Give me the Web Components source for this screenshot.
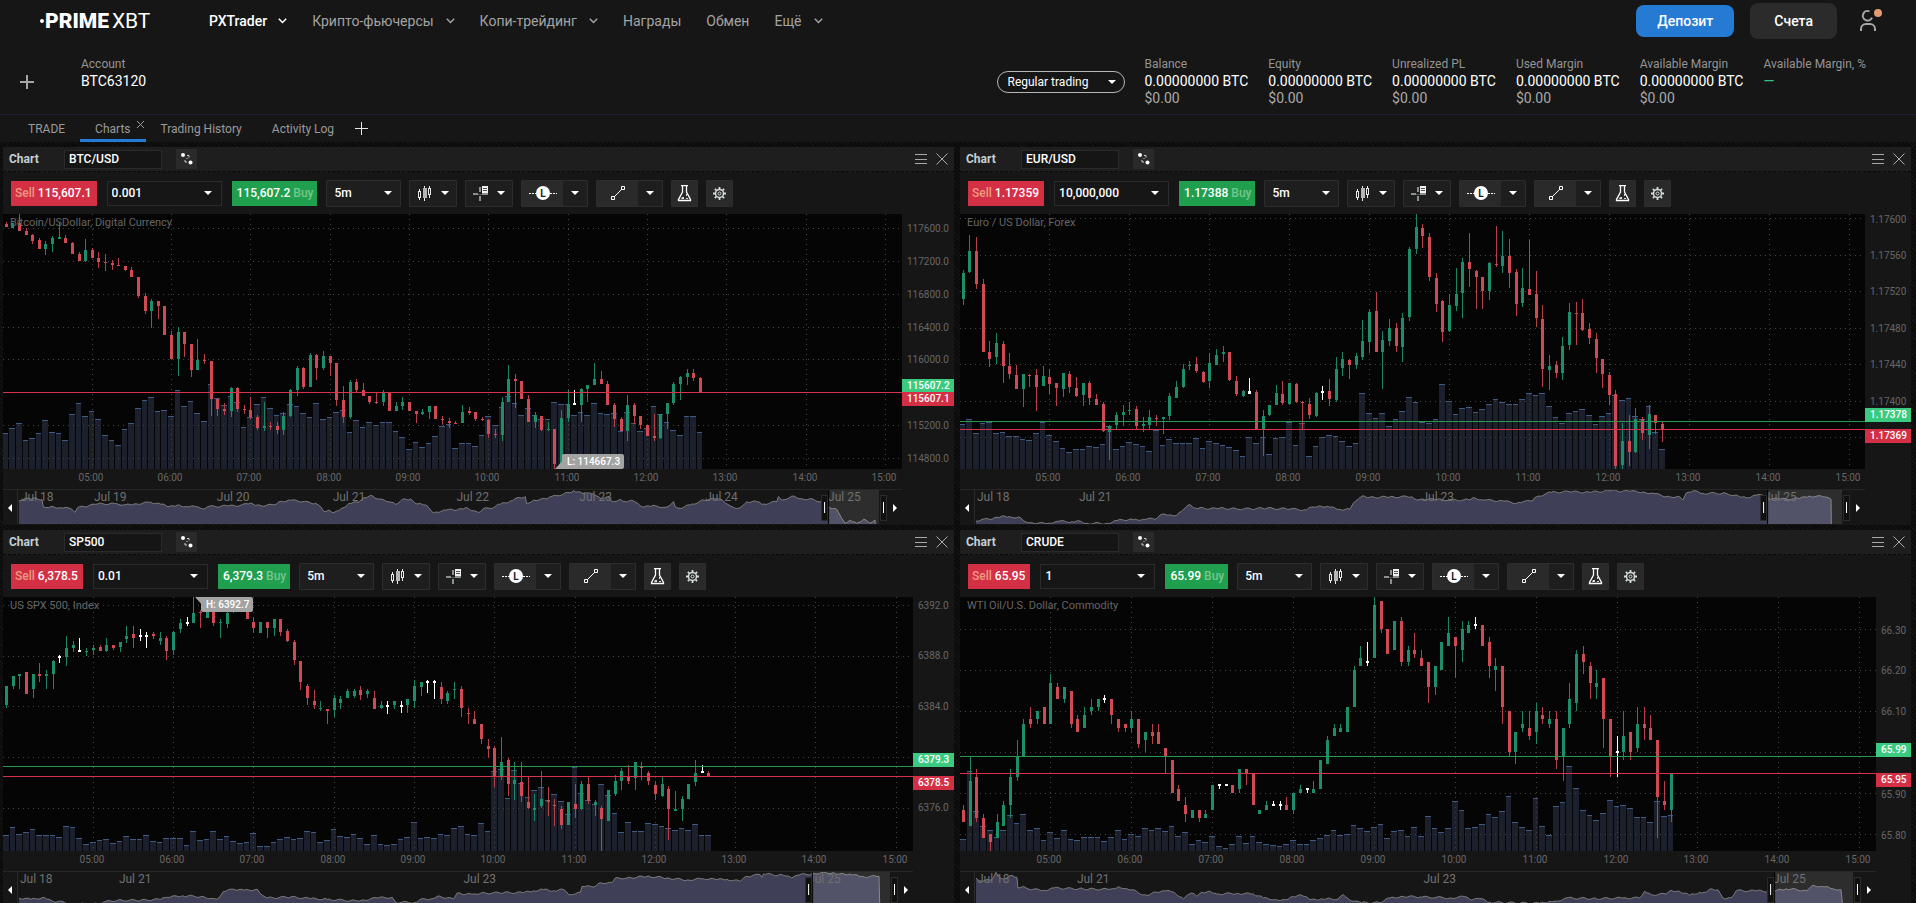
<!DOCTYPE html>
<html lang="ru">
<head>
<meta charset="utf-8">
<title>PXTrader</title>
<style>
  html, body {
    height: 100%;
    margin: 0;
  }

  body {
    background-color: #0b0b0b;
    background-image: repeating-linear-gradient(45deg, #131313 0 1px, transparent 1px 3px);
    color: #fff;
    display: flex;
    flex-direction: column;
    font-family: Roboto, "Liberation Sans", sans-serif;
    font-size: 12px;
    overflow: hidden;
  }

  body > * {
    flex: none;
  }

  main {
    display: grid;
    gap: 5px 6px;
    grid-template-columns: 1fr 1fr;
    padding: 5px 5px 0 3px;
  }
</style>
</head>
<body>

<site-header>
  <nav-item slot="nav" menu active>PXTrader</nav-item>
  <nav-item slot="nav" menu>Крипто-фьючерсы</nav-item>
  <nav-item slot="nav" menu>Копи-трейдинг</nav-item>
  <nav-item slot="nav">Награды</nav-item>
  <nav-item slot="nav">Обмен</nav-item>
  <nav-item slot="nav" menu>Ещё</nav-item>
</site-header>

<account-bar account="BTC63120">
  <account-metric label="Balance" value="0.00000000 BTC" usd="$0.00"></account-metric>
  <account-metric label="Equity" value="0.00000000 BTC" usd="$0.00"></account-metric>
  <account-metric label="Unrealized PL" value="0.00000000 BTC" usd="$0.00"></account-metric>
  <account-metric label="Used Margin" value="0.00000000 BTC" usd="$0.00"></account-metric>
  <account-metric label="Available Margin" value="0.00000000 BTC" usd="$0.00"></account-metric>
  <account-metric label="Available Margin, %" value="—" positive></account-metric>
</account-bar>

<tab-bar>
  <tab-item>TRADE</tab-item>
  <tab-item active>Charts</tab-item>
  <tab-item>Trading History</tab-item>
  <tab-item>Activity Log</tab-item>
</tab-bar>

<main>
  <chart-panel symbol="BTC/USD" amount="0.001" sell="115,607.1" buy="115,607.2">
    <price-chart data="btc"></price-chart>
  </chart-panel>
  <chart-panel symbol="EUR/USD" amount="10,000,000" sell="1.17359" buy="1.17388">
    <price-chart data="eur"></price-chart>
  </chart-panel>
  <chart-panel symbol="SP500" amount="0.01" sell="6,378.5" buy="6,379.3">
    <price-chart data="spx"></price-chart>
  </chart-panel>
  <chart-panel symbol="CRUDE" amount="1" sell="65.95" buy="65.99">
    <price-chart data="oil"></price-chart>
  </chart-panel>
</main>

<script>
// chart data
// y values are in thirds of a pixel, counted from `top`
// candle: direction, high, body top, body bottom, low
const CHARTS = {
  btc: {
    title: 'Bitcoin/USDollar, Digital Currency',
    width: 899, height: 255, axis: 52, top: 222, x0: 3.3, step: 6.61,
    grid: [265, 364, 463, 562, 658, 757, 856, 955],
    prices: [['117600.0', 265], ['117200.0', 364], ['116800.0', 461], ['116400.0', 560], ['116000.0', 658], ['115200.0', 854], ['114800.0', 953]],
    ask: {text: '115607.2', tag: 717},
    bid: {text: '115607.1', tag: 756, line: 757},
    mark: {text: 'L: 114667.3', x: 559, y: 240, w: 62, tip: '552,255 562,255 562,244'},
    candles: `r246,252,261,261 g249,249,263,263 r222,248,272,272 r264,273,285,285 r282,285,303,312 r294,300,327,327 g303,312,327,345 g288,294,312,336
      g249,291,297,297 r285,294,309,309 r306,309,342,342 r336,342,363,363 g297,330,363,366 r324,330,354,354 r336,354,366,384 r342,366,369,393
      r360,369,375,390 r354,375,378,378 r378,378,390,393 r381,390,411,411 r411,411,468,474 r459,468,513,522 g477,483,513,564 r483,483,498,537
      r498,498,585,585 r573,585,657,657 g561,576,657,708 r576,576,612,651 r612,612,690,711 g597,660,690,690 r642,660,663,672 r663,663,777,828
      r774,777,807,828 r789,807,813,825 g741,744,813,831 r741,744,807,816 r795,807,810,822 r771,810,831,837 r825,831,864,870 g786,858,864,873
      r846,858,861,870 r846,858,870,882 g816,828,870,885 g747,750,828,831 g678,684,750,768 r681,684,741,747 g639,645,741,741 r642,645,684,720
      g633,648,684,690 r648,648,669,708 r669,669,780,798 r738,780,831,849 g720,726,831,837 r717,726,750,756 r729,750,768,768 r768,768,786,792
      r759,786,789,792 g750,759,786,798 r759,759,813,813 g786,798,813,813 g771,786,798,810 r786,786,813,813 r813,813,822,849 g807,816,822,825
      g798,798,816,837 r798,798,837,837 r828,837,840,855 r834,843,849,864 r843,849,852,852 g795,816,849,849 r801,813,819,825 r816,816,837,843
      r831,837,840,843 r837,840,882,894 r867,882,885,894 g771,786,885,903 g675,717,786,786 r702,717,723,804 r723,723,777,777 r765,777,846,846
      g816,825,846,864 r828,828,870,873 g846,867,870,873 r867,867,972,987 g810,834,972,987 g750,792,834,846 w750,789,795,795 g744,747,795,846
      g735,735,747,786 g669,717,735,735 r693,717,732,732 r723,732,795,795 r789,795,837,861 r831,837,873,873 g765,795,873,903 r789,795,828,852
      r828,828,855,867 r855,855,888,888 r822,888,894,903 g822,822,894,897 g789,789,822,867 g726,732,789,795 g708,711,732,780 g687,699,711,735
      r687,699,714,723 r711,714,756,756`,
    volume: `880 865 850 901 895 880 841 877 880 901 823 790 829 814 838 886 901 916 868 850 805 781 772 814 811 829 751 799 784 820 844 733 775 796 769 787
      862 832 793 772 805 826 820 793 799 820 832 790 838 832 817 811 877 841 862 847 856 847 847 874 892 928 907 922 910 889 859 853 925 910 910 919
      886 829 856 802 769 790 826 805 826 838 838 787 793 793 826 817 826 790 820 823 820 874 817 850 874 865 799 823 847 871 886 829 829 877`,
    history: {
      left: 51, top: 1050, from: 812, to: 862,
      days: [['Jul 18', 3], ['Jul 19', 76], ['Jul 20', 199], ['Jul 21', 315], ['Jul 22', 439], ['Jul 23', 562], ['Jul 24', 688], ['Jul 25', 811]],
      points: `54,1082 72,1075 90,1078 105,1074 123,1079 127,1100 150,1100 180,1103 210,1106 222,1117 230,1103 250,1100 290,1092 340,1091 375,1094 400,1092 450,1087
        480,1093 505,1100 530,1095 560,1100 590,1100 605,1107 620,1100 680,1098 715,1098 750,1089 765,1097 820,1095 840,1084 870,1081 905,1085 945,1090 960,1100
        970,1115 985,1110 1000,1118 1015,1112 1045,1090 1075,1087 1090,1073 1110,1066 1130,1077 1165,1085 1185,1093 1205,1078 1230,1077 1250,1092 1275,1095
        1300,1119 1330,1110 1370,1110 1395,1103 1420,1112 1440,1116 1455,1103 1470,1105 1500,1093 1530,1083 1550,1073 1575,1070 1578,1090 1600,1080 1640,1077
        1655,1069 1690,1062 1720,1052 1745,1060 1780,1062 1800,1075 1820,1070 1835,1085 1860,1078 1875,1085 1900,1083 1920,1098 1950,1100 1965,1097 1990,1102
        2010,1095 2020,1085 2025,1100 2040,1105 2070,1095 2090,1090 2110,1080 2150,1077 2170,1083 2190,1098 2215,1105 2240,1085 2270,1085 2285,1093 2330,1085
        2335,1070 2345,1080 2380,1068 2405,1076 2440,1078 2460,1085 2484,1100 2510,1108 2525,1135 2535,1150 2550,1140 2570,1150 2590,1138 2610,1150 2625,1140 2626,1152`
    }
  },
  eur: {
    title: 'Euro / US Dollar, Forex',
    width: 905, height: 255, axis: 46, top: 222, x0: 3.3, step: 6.66,
    grid: [235, 346, 454, 565, 673, 784, 892],
    prices: [['1.17600', 236], ['1.17560', 344], ['1.17520', 454], ['1.17480', 563], ['1.17440', 673], ['1.17400', 782]],
    ask: {text: '1.17378', tag: 804, line: 844},
    bid: {text: '1.17369', tag: 867, line: 868},
    candles: `g390,399,477,495 g285,333,396,399 r291,333,432,447 r417,432,636,636 r603,636,657,681 g579,609,651,672 r603,612,678,729 r639,678,702,717
      r675,705,747,747 g702,702,747,801 r702,705,708,741 r687,705,741,813 g678,708,738,738 r687,711,732,762 r729,729,744,798 g699,699,747,771
      r693,702,741,759 r711,744,768,771 g729,729,765,798 r723,729,774,795 r762,777,795,795 r786,792,873,876 g855,858,876,960 g816,825,855,867
      g795,816,825,858 g786,810,813,825 r798,807,858,867 g831,852,858,876 g810,831,855,867 r825,834,837,858 g831,831,837,882 g759,768,828,840
      g723,741,774,774 g672,687,741,744 g663,675,678,690 r651,672,693,699 r693,696,726,729 g639,669,723,744 g627,645,675,675 g618,636,642,666
      r636,636,720,723 r708,723,762,768 g750,753,768,771 w714,753,762,762 r750,756,867,867 g810,828,867,948 g795,795,825,828 g735,759,795,795
      r723,762,789,795 g729,729,792,795 r729,732,786,789 r783,786,789,867 r774,792,825,837 g756,759,828,831 w738,753,759,780 r717,753,777,798
      g651,687,780,786 g636,657,684,708 r657,660,675,717 g639,648,675,687 g540,603,651,660 g507,516,606,639 r456,513,636,636 g573,600,636,747
      g537,564,603,618 r549,564,618,636 g519,534,621,666 g321,327,531,543 g222,261,327,342 r252,264,288,324 r279,291,411,423 r399,414,492,516
      r480,483,576,606 g462,495,573,576 g384,462,498,513 g354,366,459,534 r279,366,387,441 r390,393,411,507 r411,411,453,507 g366,369,453,480
      r258,372,375,381 g273,348,378,399 r297,348,399,444 r387,396,492,528 g384,444,489,501 r300,447,465,465 r393,462,534,561 r495,537,687,741
      g645,678,690,750 r663,675,699,714 g591,618,699,720 g489,516,615,630 r486,519,522,615 r477,519,570,573 r549,567,594,612 r579,597,654,699
      r657,657,702,744 r696,705,765,795 r750,762,978,987 g849,903,975,987 r825,903,936,978 g804,837,936,939 r831,837,879,900 g795,822,885,927
      r825,825,849,882 r846,852,870,906`,
    volume: `853 838 880 850 847 880 877 889 889 898 901 880 847 886 904 925 937 928 928 919 922 913 859 928 919 907 913 919 934 871 916 898 910 910 910 895
      925 904 910 916 922 931 949 892 910 892 943 895 892 847 916 850 949 919 892 886 889 904 919 910 760 820 835 820 859 838 814 772 787 847 850 838
      733 784 823 805 802 817 808 793 778 787 793 793 778 760 766 760 799 832 850 820 814 808 826 853 829 820 766 781 775 829 838 799 877 928`,
    history: {
      left: 54, top: 1050, from: 794, to: 868,
      days: [['Jul 18', 2], ['Jul 21', 104], ['Jul 23', 447], ['Jul 25', 790]],
      points: `57,1143 75,1138 95,1137 120,1132 140,1127 150,1132 185,1131 200,1143 225,1148 270,1151 300,1144 345,1145 365,1142 390,1150 450,1150 480,1142 515,1139
        530,1139 560,1138 600,1136 610,1125 640,1124 660,1126 680,1108 700,1094 710,1103 730,1103 750,1108 790,1104 840,1107 930,1105 1000,1107 1050,1110
        1065,1101 1090,1097 1120,1102 1150,1108 1180,1108 1190,1090 1205,1078 1220,1067 1240,1072 1300,1071 1365,1070 1375,1077 1400,1078 1440,1079 1490,1080
        1540,1080 1550,1073 1580,1080 1640,1083 1680,1090 1700,1085 1728,1083 1740,1070 1785,1057 1840,1055 1900,1057 1960,1052 2020,1054 2060,1056 2090,1060
        2130,1070 2170,1070 2180,1080 2190,1059 2210,1053 2240,1060 2310,1060 2350,1070 2370,1073 2400,1066 2434,1066 2436,1075 2470,1078 2530,1076 2560,1068
        2600,1070 2625,1078 2626,1152`
    }
  },
  spx: {
    title: 'US SPX 500, Index',
    width: 910, height: 254, axis: 41, top: 216, x0: 3.4, step: 6.69,
    grid: [241, 394, 544, 697, 850],
    prices: [['6392.0', 241], ['6388.0', 391], ['6384.0', 544], ['6376.0', 847]],
    ask: {text: '6379.3', tag: 684, line: 724},
    bid: {text: '6378.5', tag: 753, line: 754},
    mark: {text: 'H: 6392.7', x: 198, y: 0, w: 52, tip: '192,0 201,0 201,10'},
    candles: `g483,483,540,549 g453,453,483,492 g447,447,453,492 r441,441,507,507 g447,447,492,519 r414,447,453,471 g435,447,453,492 g405,408,447,492
      w390,393,399,414 g333,369,396,423 g348,360,369,381 w339,375,381,381 g369,378,381,393 g360,369,375,390 r360,366,378,378 g339,360,378,381
      r360,360,369,375 g351,351,366,381 g303,333,342,354 r303,327,339,369 w312,330,336,348 w321,330,336,369 r321,327,333,342 g321,339,348,360
      r333,339,378,405 g318,321,375,390 g282,294,312,324 w276,291,297,303 g216,264,294,294 r255,261,264,309 g240,255,279,279 r240,258,294,303
      g282,291,294,339 g255,264,297,309 g240,250,262,264 r230,240,250,255 r240,255,282,282 r276,291,309,324 g291,291,324,324 r291,291,309,339
      g282,282,309,333 r282,282,321,333 r312,318,348,351 r345,351,405,420 r408,408,471,495 r477,483,519,540 r495,528,540,552 g528,549,552,558
      r552,552,558,597 g510,519,555,576 g513,522,534,552 g492,498,519,519 g492,498,513,519 r483,495,510,525 g492,498,507,519 r498,519,552,552
      g528,540,549,552 w528,540,546,567 g528,528,540,552 w528,540,546,564 g522,522,540,564 g465,483,528,549 g471,471,486,513 w465,468,474,504
      w465,468,474,522 r471,486,522,537 g498,504,528,537 g471,492,495,522 r483,492,549,576 r549,564,567,597 r558,582,597,597 r597,597,642,657
      r642,663,672,699 r663,669,753,786 g636,711,753,765 r699,705,777,813 g711,765,777,825 r711,771,813,831 r756,831,849,852 g807,849,855,888
      g738,822,843,849 r786,825,831,873 r822,840,843,903 r843,852,900,912 g831,831,900,900 r777,837,852,879 g768,777,852,855 r756,777,828,837
      g825,831,840,873 r843,849,882,978 g795,795,888,888 g750,768,807,813 g729,738,768,795 r720,753,768,777 g711,711,759,795 r711,726,729,765
      r738,744,768,780 r768,780,807,825 g756,777,813,816 r783,792,852,945 g798,852,858,858 g813,822,852,888 g777,777,822,822 g705,744,771,783
      w720,738,744,744 r738,744,753,753`,
    volume: `931 907 928 922 913 931 931 931 937 904 907 940 958 952 946 943 955 949 934 943 943 931 949 952 940 940 940 961 919 946 943 919 943 934 949 955
      952 925 964 964 952 943 937 943 940 919 922 952 946 913 934 937 928 940 958 931 958 961 958 943 937 892 940 937 940 928 931 910 904 928 931 895
      919 737 731 820 734 775 817 796 787 826 808 829 868 725 805 826 838 778 811 865 922 892 919 919 895 898 904 910 916 910 916 898 931 931`,
    history: {
      left: 51, top: 1042, from: 796, to: 873,
      days: [['Jul 18', 2], ['Jul 21', 101], ['Jul 23', 446], ['Jul 25', 791]],
      points: `54,1120 90,1124 130,1118 145,1124 155,1130 190,1133 210,1138 300,1138 315,1130 350,1127 420,1127 480,1124 500,1118 545,1113 600,1116 640,1122 655,1120
        668,1100 700,1094 730,1097 770,1094 785,1112 800,1120 870,1117 930,1122 980,1124 1050,1128 1090,1126 1130,1120 1175,1118 1185,1133 1250,1133 1265,1122
        1290,1123 1310,1115 1330,1120 1360,1122 1370,1105 1390,1110 1420,1108 1440,1106 1510,1104 1570,1104 1600,1098 1630,1095 1660,1098 1690,1095 1705,1110
        1740,1103 1745,1085 1780,1087 1800,1074 1835,1074 1845,1060 1880,1060 1940,1055 2000,1060 2060,1066 2110,1062 2150,1065 2180,1064 2220,1070 2240,1055
        2280,1050 2285,1058 2290,1048 2350,1052 2375,1060 2400,1050 2434,1048 2440,1046 2500,1044 2520,1048 2550,1048 2580,1056 2637,1055 2639,1144`
    }
  },
  oil: {
    title: 'WTI Oil/U.S. Dollar, Commodity',
    width: 916, height: 254, axis: 35, top: 216, x0: 3.3, step: 6.74,
    grid: [313, 436, 559, 682, 805, 928],
    prices: [['66.30', 314], ['66.20', 436], ['66.10', 559], ['65.90', 806], ['65.80', 929]],
    ask: {text: '65.99', tag: 654, line: 694},
    bid: {text: '65.95', tag: 744, line: 745},
    candles: `r840,855,891,891 g696,768,903,903 r732,756,879,891 r867,879,939,939 r927,927,951,978 g867,891,939,939 g828,840,903,903 g732,756,840,879
      g645,693,756,768 g582,597,693,696 r546,582,597,609 g558,558,582,597 r546,546,597,597 g447,474,597,597 r474,486,522,522 g486,486,522,534
      r498,498,597,609 r570,582,621,621 g546,570,609,609 g522,546,558,570 g522,522,546,558 w510,519,525,534 r522,522,570,597 r582,582,609,621
      r597,597,609,621 g558,582,609,621 r582,582,657,669 g621,621,645,681 r597,621,633,657 r597,621,657,657 r669,669,693,747 r705,705,804,804
      r780,792,828,828 r816,840,867,891 g855,855,879,879 r855,855,879,891 g855,867,879,879 g780,780,855,855 w777,777,783,792 w777,777,783,783
      r780,780,804,804 g732,732,792,804 r732,732,744,780 r744,747,840,840 g855,855,867,867 g828,840,855,855 w828,837,843,843 w828,837,843,855
      r816,840,855,855 g804,804,855,867 g780,792,804,804 w789,789,795,804 g768,792,804,804 g705,705,792,792 g633,645,717,717 g597,609,633,633
      g597,609,621,621 g546,546,621,621 g423,435,546,546 g363,399,423,423 w351,408,414,423 g216,240,399,399 r228,228,312,324 r312,312,387,387
      g288,288,375,375 r276,288,411,423 g363,375,411,423 r324,375,387,399 r375,399,423,423 r411,411,486,534 g423,423,486,510 g351,351,435,435
      g276,324,363,363 r336,336,363,459 g288,312,375,411 g288,300,324,324 w276,297,303,312 r300,300,363,363 r336,351,423,459 g399,423,435,498
      r423,423,546,597 r558,558,681,693 g621,621,681,717 g558,597,609,621 r558,609,633,645 g534,558,621,657 r546,570,582,597 g558,582,597,609
      r558,582,705,732 g609,609,693,768 g474,522,597,609 g375,387,534,558 r363,387,411,447 r411,423,474,522 g435,474,486,522 r459,459,582,669
      r582,582,693,756 w633,678,684,756 g558,633,681,705 r621,621,681,705 g546,597,669,681 r546,597,609,645 r570,609,645,645 r645,645,816,939
      r768,828,840,855 g744,744,855,891`,
    volume: `943 739 859 904 916 937 916 871 895 868 916 910 946 922 940 916 943 946 937 937 937 949 937 916 943 928 934 910 916 910 919 904 934 922 958 946
      952 934 964 970 958 934 955 934 952 958 961 964 958 946 958 958 946 940 931 916 931 928 901 910 919 907 898 940 919 916 934 907 934 874 910 922
      910 829 856 910 907 898 868 877 859 814 892 907 916 820 904 931 844 832 724 790 856 871 886 865 826 844 841 850 877 877 892 829 874 871`,
    history: {
      left: 54, top: 1042, from: 801, to: 879,
      days: [['Jul 18', 2], ['Jul 21', 102], ['Jul 23', 449], ['Jul 25', 799]],
      points: `57,1060 75,1070 105,1065 117,1043 130,1060 150,1060 165,1052 180,1058 183,1090 200,1085 215,1093 260,1097 290,1090 380,1093 460,1094 485,1086 510,1092
        530,1095 545,1105 570,1112 590,1103 620,1098 650,1102 680,1122 705,1105 720,1115 735,1103 760,1100 780,1108 840,1106 890,1108 920,1120 960,1125 985,1125
        1010,1116 1035,1112 1060,1125 1085,1127 1110,1122 1145,1123 1160,1110 1175,1122 1190,1130 1215,1134 1270,1134 1300,1120 1340,1115 1390,1117 1440,1118
        1480,1120 1525,1116 1545,1126 1570,1122 1600,1133 1750,1136 1780,1130 1800,1130 1830,1120 1920,1122 2000,1120 2050,1120 2065,1100 2085,1110 2130,1108
        2145,1097 2170,1100 2200,1112 2230,1103 2250,1103 2260,1094 2285,1095 2300,1120 2325,1120 2340,1098 2400,1099 2450,1100 2460,1098 2490,1092 2550,1098
        2570,1082 2600,1086 2630,1092 2655,1095 2660,1144`
    }
  }
};

const HOURS = ['05:00', '06:00', '07:00', '08:00', '09:00', '10:00', '11:00', '12:00', '13:00', '14:00', '15:00'];

const COLORS = {
  r: ['#b5404a', '#cf4a55'],
  g: ['#1c8566', '#1d8e6c'],
  w: ['#ffffff', '#ffffff']
};

const ICONS = {
  candles: `<svg width="15" height="15" viewBox="0 0 15 15" fill="none" stroke="#e8e8e8" shape-rendering="crispEdges">
    <path d="M2.5 3v2M2.5 12v2M12.5 0v2M12.5 9v3"/><rect x="1.500" y="5.500" width="2" height="6"/><rect x="11.500" y="2.500" width="2" height="6"/>
    <path d="M7.500 0v15"/><rect x="6" y="2" width="4" height="10" fill="#b4b4b4" stroke="none"/></svg>`,
  cross: `<svg width="15" height="15" viewBox="0 0 15 15" shape-rendering="crispEdges">
    <path d="M0 8h5M9 8h6M7 1v5M7 10v5" stroke="#8a8f8f" stroke-width="2"/><path d="M5 8h4" stroke="#555"/>
    <path d="M9 0h6v7h-6z" fill="#f2f2f2"/><path d="M10 2.500h4M10 4.500h4" stroke="#555"/></svg>`,
  level: `<svg width="28" height="14" viewBox="0 0 28 14"><path d="M0 7.500h28" stroke="#fff" stroke-dasharray="2 1"/>
    <circle cx="14" cy="7" r="7" fill="#fff"/><text x="14" y="11" font-size="10" font-weight="700" text-anchor="middle" fill="#222">L</text></svg>`,
  line: `<svg width="14" height="14" viewBox="0 0 14 14" fill="none" stroke="#fff"><path d="M3 11l8-8"/><path d="M.5 10.500h3v3h-3zM10.500.5h3v3h-3z"/></svg>`,
  flask: `<svg width="15" height="17" viewBox="0 0 15 17" fill="none" stroke="#fff"><path d="M4 .5h7M5.500 1v6L1.500 14.500v1h12v-1L9.500 7V1" stroke-width="1.300"/>
    <path d="M5 12h2v2H4zM9 9h1v2H9zM9 13h2v1H9z" fill="#ddd" stroke="none"/></svg>`,
  gear: `<svg width="13" height="13" viewBox="0 0 13 13" fill="none" stroke="#d5dcdc"><circle cx="6.500" cy="6.500" r="4" stroke-width="1.500"/>
    <circle cx="6.500" cy="6.500" r="1.500"/><path d="M6.500 0v2M6.500 11v2M0 6.500h2M11 6.500h2M1.900 1.900l1.400 1.400M9.700 9.700l1.400 1.400M11.100 1.900L9.700 3.300M3.300 9.700l-1.400 1.400" stroke-width="1.800"/></svg>`,
  link: `<svg width="12" height="12" viewBox="0 0 12 12" fill="#fff"><circle cx="2" cy="2" r="2"/><circle cx="9.500" cy="9.500" r="2"/>
    <path d="M6 2.500h2v2M4 7v2h2M5.500 6l1-1" fill="none" stroke="#ccc"/></svg>`,
  menu: `<svg width="12" height="11" viewBox="0 0 12 11" stroke="#a8a8a8" shape-rendering="crispEdges"><path d="M0 .5h12M0 5h12M0 9.500h12"/></svg>`,
  close: `<svg width="12" height="12" viewBox="0 0 12 12" stroke="#a8a8a8"><path d="M.5.5l11 11M11.500.5l-11 11"/></svg>`
};

// shared button and select look
const CONTROLS = `
  button, select, input {
    background: none;
    border: none;
    border-radius: 0;
    box-sizing: border-box;
    color: inherit;
    font: inherit;
    margin: 0;
    padding: 0;
  }
  select {
    appearance: none;
    outline: none;
    width: 100%;
  }
  button {
    align-items: center;
    cursor: pointer;
    display: flex;
    justify-content: center;
  }
  svg {
    display: block;
  }
  .drop {
    align-items: center;
    display: grid;
  }
  .drop > select, .drop::after {
    grid-area: 1 / 1;
  }
  .drop::after, .caret::after {
    border-left: 4px solid transparent;
    border-right: 4px solid transparent;
    border-top: 4px solid #fff;
    content: '';
  }
  .drop::after {
    justify-self: end;
    margin-right: 8px;
    pointer-events: none;
  }`;

class SiteHeader extends HTMLElement {
  constructor() {
    super();
    const shadow = this.attachShadow({mode: 'open'});
    shadow.innerHTML = `
      <style>
        ${CONTROLS}
        :host {
          align-items: center;
          background: #161616;
          display: flex;
          height: 41px;
          padding: 0 34px 0 40px;
        }
        .logo {
          align-items: center;
          color: #fff;
          display: flex;
          font-size: 21px;
          font-weight: 400;
          text-decoration: none;
          width: 169px;
        }
        .logo b {
          font-weight: 900;
          margin-right: 3px;
        }
        .logo svg {
          margin-right: 1px;
        }
        nav {
          display: flex;
          flex: 1;
          gap: 25px;
        }
        .deposit, .accounts {
          border-radius: 8px;
          font-size: 14px;
          font-weight: 500;
        }
        .deposit {
          background: #257ad3;
          height: 32px;
          margin-right: 16px;
          padding: 0 21px;
        }
        .accounts {
          background: #2b2b2b;
          height: 36px;
          margin-right: 21px;
          padding: 0 24px;
        }
      </style>
      <a class="logo" href="#" aria-label="PrimeXBT">
        <svg width="4" height="6" viewBox="0 0 4 6"><circle cx="2" cy="3" r="2" fill="#fff"/></svg><b>PRIME</b>XBT
      </a>
      <nav><slot name="nav"></slot></nav>
      <button class="deposit">Депозит</button>
      <button class="accounts">Счета</button>
      <button aria-label="Profile">
        <svg width="24" height="25" viewBox="1 0 24 25" fill="none" stroke="#a6a6a6" stroke-width="2">
          <path d="M12.500 3.300a4.800 4.800 0 1 0 2.500 6.500"/><path d="M4 23v-2a5 5 0 0 1 5-5h4a5 5 0 0 1 5 5v2"/>
          <circle cx="21" cy="5" r="4" fill="#e49a72" stroke="none"/>
        </svg>
      </button>`;
  }
}

class NavItem extends HTMLElement {
  constructor() {
    super();
    const shadow = this.attachShadow({mode: 'open'});
    shadow.innerHTML = `
      <style>
        :host {
          display: block;
        }
        a {
          align-items: center;
          color: #a3a3a3;
          display: flex;
          font-size: 14px;
          gap: 12px;
          line-height: 16px;
          text-decoration: none;
        }
        svg {
          display: none;
        }
        :host([menu]) svg {
          display: block;
        }
        :host([active]) a {
          color: #fff;
          font-weight: 500;
          gap: 11px;
        }
      </style>
      <a href="#"><slot></slot>
        <svg width="9" height="6" viewBox="0 0 9 6" fill="none" stroke="currentColor" stroke-width="1.500"><path d="M.8.8l3.700 3.700L8.200.8"/></svg>
      </a>`;
  }
}

class AccountBar extends HTMLElement {
  connectedCallback() {
    const shadow = this.attachShadow({mode: 'open'});
    shadow.innerHTML = `
      <style>
        ${CONTROLS}
        :host {
          align-items: center;
          background: #161616;
          border-bottom: 1px solid #1c2136;
          display: flex;
          height: 65px;
          padding: 8px 50px 0 20px;
        }
        .add {
          margin-right: 47px;
        }
        .account {
          flex: 1;
        }
        .mode {
          border: 1px solid #b5b5b5;
          border-radius: 11px;
          height: 20px;
          margin-right: 20px;
          width: 126px;
        }
        .mode select {
          height: 20px;
          padding: 0 10px;
        }
        .metrics {
          display: flex;
          gap: 20px;
        }
      </style>
      <button class="add" aria-label="Add account">
        <svg width="14" height="14" viewBox="0 0 14 14" stroke="#a6a6a6" stroke-width="2"><path d="M7 0v14M0 7h14"/></svg>
      </button>
      <account-metric class="account" label="Account" value="${this.getAttribute('account')}"></account-metric>
      <div class="mode drop"><select aria-label="Trading mode"><option>Regular trading</option></select></div>
      <div class="metrics"><slot></slot></div>`;
  }
}

class AccountMetric extends HTMLElement {
  connectedCallback() {
    const shadow = this.attachShadow({mode: 'open'});
    shadow.innerHTML = `
      <style>
        :host {
          display: grid;
          font-size: 14px;
          grid-template-rows: 17px 17px 17px;
          line-height: 17px;
          white-space: nowrap;
        }
        .label {
          color: #949494;
          font-size: 12px;
        }
        .usd {
          color: #a9a9a9;
        }
        :host([positive]) .value {
          color: #35c481;
        }
      </style>
      <div class="label">${this.getAttribute('label')}</div>
      <div class="value">${this.getAttribute('value')}</div>
      <div class="usd">${this.getAttribute('usd') || ''}</div>`;
  }
}

class TabBar extends HTMLElement {
  constructor() {
    super();
    const shadow = this.attachShadow({mode: 'open'});
    shadow.innerHTML = `
      <style>
        ${CONTROLS}
        :host {
          align-items: center;
          background: #161616;
          display: flex;
          height: 27px;
          padding-left: 13px;
        }
        button {
          margin-left: 6px;
        }
      </style>
      <slot></slot>
      <button aria-label="Add tab">
        <svg width="13" height="13" viewBox="0 0 13 13" stroke="#e6e6e6" shape-rendering="crispEdges"><path d="M6.500 0v13M0 6.500h13"/></svg>
      </button>`;
  }
}

class TabItem extends HTMLElement {
  constructor() {
    super();
    const shadow = this.attachShadow({mode: 'open'});
    shadow.innerHTML = `
      <style>
        ${CONTROLS}
        :host {
          color: #9a9a9a;
          display: block;
          position: relative;
        }
        .tab {
          border-bottom: 3px solid transparent;
          height: 27px;
          padding: 4px 15px 0;
        }
        .close {
          display: none;
          position: absolute;
          right: 2px;
          top: 6px;
        }
        :host([active]) .tab {
          border-color: #257ad3;
        }
        :host([active]) .close {
          display: block;
        }
      </style>
      <button class="tab"><slot></slot></button>
      <button class="close" aria-label="Close tab">
        <svg width="7" height="7" viewBox="0 0 7 7" stroke="#9a9a9a"><path d="M0 0l7 7M7 0L0 7"/></svg>
      </button>`;
  }
}

class ChartPanel extends HTMLElement {
  connectedCallback() {
    const shadow = this.attachShadow({mode: 'open'});
    const get = name => this.getAttribute(name);
    shadow.innerHTML = `
      <style>
        ${CONTROLS}
        :host {
          background: #161616;
          display: flex;
          flex-direction: column;
          min-width: 0;
        }
        header {
          align-items: center;
          background: #1e1e1e;
          border-bottom: 1px dashed #080808;
          display: flex;
          height: 24px;
          padding: 0 6px;
        }
        h2 {
          color: #c3cfd4;
          font-size: 12px;
          font-weight: 700;
          margin: 0;
          width: 55px;
        }
        .symbol {
          background: #151515;
          border: 1px solid #2b2b2b;
          font-weight: 500;
          height: 19px;
          margin-right: 14px;
          padding: 0 4px;
          width: 98px;
        }
        .link {
          background: #2a2a2a;
          height: 20px;
          margin-right: auto;
          width: 21px;
        }
        .menu {
          margin-right: 9px;
        }
        .toolbar {
          align-items: center;
          display: flex;
          gap: 8px;
          height: 42px;
          padding: 0 8px;
        }
        .trade {
          align-items: center;
          display: flex;
          gap: 10px;
          margin-right: 1px;
        }
        .sell, .buy {
          font-weight: 500;
          gap: 3px;
          height: 25px;
        }
        .sell {
          background: #d32f45;
          padding: 0 5px 0 4px;
        }
        .sell span {
          color: #ee9a80;
        }
        .buy {
          background: #20a04f;
          padding: 0 4px 0 5px;
        }
        .buy span {
          color: #76c68a;
        }
        .amount {
          background: #161616;
          border: 1px solid #2b2b2b;
          box-sizing: border-box;
          font-weight: 500;
          height: 25px;
          width: 115px;
        }
        .amount select {
          height: 23px;
          padding: 0 4px;
        }
        .amount::after {
          margin-right: 9px;
        }
        .tool {
          background: #1e1e1e;
          border: 1px solid #2d2d2d;
          border-radius: 1px;
          box-sizing: border-box;
          height: 27px;
        }
        .period {
          font-weight: 500;
          width: 75px;
        }
        .period select {
          height: 25px;
          padding: 0 7px;
        }
        .pick {
          gap: 9px;
          width: 48px;
        }
        .split {
          display: flex;
        }
        .split button {
          background: #2a2a2a;
          height: 25px;
          width: 41px;
        }
        .split button + button {
          background: #1e1e1e;
          width: 24px;
        }
        .icon {
          background: #2a2a2a;
          width: 27px;
        }
      </style>
      <header>
        <h2>Chart</h2>
        <input class="symbol" aria-label="Symbol" value="${get('symbol')}">
        <button class="link" aria-label="Link">${ICONS.link}</button>
        <button class="menu" aria-label="Menu">${ICONS.menu}</button>
        <button aria-label="Close">${ICONS.close}</button>
      </header>
      <div class="toolbar">
        <div class="trade">
          <button class="sell"><span>Sell</span>${get('sell')}</button>
          <div class="amount drop"><select aria-label="Amount"><option>${get('amount')}</option></select></div>
          <button class="buy">${get('buy')}<span>Buy</span></button>
        </div>
        <div class="tool period drop"><select aria-label="Period"><option>5m</option></select></div>
        <button class="tool pick caret" aria-label="Chart type">${ICONS.candles}</button>
        <button class="tool pick caret" aria-label="Crosshair">${ICONS.cross}</button>
        <div class="tool split">
          <button aria-label="Limit order">${ICONS.level}</button>
          <button class="caret" aria-label="Order types"></button>
        </div>
        <div class="tool split">
          <button aria-label="Trend line">${ICONS.line}</button>
          <button class="caret" aria-label="Drawings"></button>
        </div>
        <button class="tool icon" aria-label="Studies">${ICONS.flask}</button>
        <button class="tool icon" aria-label="Settings">${ICONS.gear}</button>
      </div>
      <slot></slot>`;
  }
}

class PriceChart extends HTMLElement {
  connectedCallback() {
    const c = CHARTS[this.getAttribute('data')];
    const shadow = this.attachShadow({mode: 'open'});
    shadow.innerHTML = `
      <style>
        ${CONTROLS}
        :host {
          display: grid;
          grid-template-columns: minmax(0, 1fr) ${c.axis}px;
        }
        svg {
          overflow: hidden;
          width: 100%;
        }
        text {
          fill: #666;
          font-size: 10px;
        }
        .plot {
          background: #050505;
        }
        .plot .title {
          font-size: 11px;
        }
        .prices {
          grid-area: 1 / 2 / 4 / 3;
        }
        .tag, .mark {
          fill: #fff;
          font-weight: 500;
        }
        .history {
          border-top: 1px solid #262626;
          display: flex;
          height: 35px;
        }
        .history button {
          flex: 0 0 14px;
        }
        .history button svg {
          width: 4px;
        }
        .history > svg {
          border-left: 1px solid #2a2a2a;
          flex: 1;
          min-width: 0;
        }
        .history text {
          fill: #707070;
          font-size: 12px;
        }
      </style>
      <svg class="plot" height="${c.height}">
        <svg viewBox="0 0 ${c.width} ${c.height}" width="100%" height="100%" preserveAspectRatio="none" shape-rendering="crispEdges">
          ${this.volume(c)}${this.grid(c)}${this.candles(c)}${this.lines(c)}
        </svg>
        <text class="title" x="7" y="12">${c.title}</text>
        ${this.mark(c)}
      </svg>
      <svg class="times" height="20">${this.times(c)}</svg>
      <div class="history">
        <button aria-label="Back"><svg height="8" viewBox="0 0 4 8"><path d="M4 0v8L0 4z" fill="#fff"/></svg></button>
        ${this.history(c)}
        <button aria-label="Forward"><svg height="8" viewBox="0 0 4 8"><path d="M0 0v8l4-4z" fill="#fff"/></svg></button>
      </div>
      <svg class="prices" height="${c.height + 20}">${this.prices(c)}</svg>`;
  }

  x(c, i) {
    return Math.floor(c.x0 + i * c.step);
  }

  y(c, value) {
    return Math.round((value - c.top) / 3);
  }

  volume(c) {
    return c.volume.trim().split(/\s+/).map((v, i) => {
      const x = this.x(c, i) - 3;
      const w = this.x(c, i + 1) - 4 - x;
      const y = this.y(c, +v);
      return `<rect x="${x}" y="${y}" width="${w}" height="${c.height - y}" fill="#1c202c"/><rect x="${x}" y="${y}" width="${w}" height="1" fill="#3f5a84"/>`;
    }).join('');
  }

  grid(c) {
    const rows = c.grid.map(v => `M0 ${this.y(c, v)}.5H${c.width}`).join('');
    const cols = HOURS.map((h, i) => `M${this.x(c, 13 + 12 * i)}.5 0V${c.height}`).join('');
    return `<path d="${rows}${cols}" stroke="#424242" stroke-dasharray="1 4" fill="none"/>`;
  }

  candles(c) {
    return c.candles.trim().split(/\s+/).map((item, i) => {
      const [high, top, bottom, low] = item.slice(1).split(',').map(v => this.y(c, +v));
      const [wick, body] = COLORS[item[0]];
      const x = this.x(c, i);
      return `<rect x="${x}" y="${high}" width="1" height="${low - high}" fill="${wick}"/>
        <rect x="${x - 1}" y="${top}" width="3" height="${Math.max(1, bottom - top)}" fill="${body}"/>`;
    }).join('');
  }

  lines(c) {
    const line = (v, color) => v ? `<rect x="0" y="${this.y(c, v)}" width="${c.width}" height="1" fill="${color}"/>` : '';
    return line(c.ask.line, '#249a4c') + line(c.bid.line, '#d8334a');
  }

  mark(c) {
    if (!c.mark) return '';
    const {x, y, w, tip, text} = c.mark;
    return `<svg viewBox="0 0 ${c.width} ${c.height}" width="100%" height="100%">
      <rect x="${x}" y="${y}" width="${w}" height="15" rx="2" fill="#a3a3a3"/><polygon points="${tip}" fill="#a3a3a3"/>
      <text class="mark" x="${x + 5}" y="${y + 11}">${text}</text></svg>`;
  }

  times(c) {
    return HOURS.map((h, i) => {
      const x = (this.x(c, 13 + 12 * i) - 1) / c.width * 100;
      return `<text x="${x}%" y="12" text-anchor="middle">${h}</text>`;
    }).join('');
  }

  prices(c) {
    const labels = c.prices.map(([text, v]) => `<text x="5" y="${this.y(c, v) + 4}">${text}</text>`).join('');
    const tag = (item, color) => {
      const y = this.y(c, item.tag);
      return `<rect x="0" y="${y}" width="100%" height="14" fill="${color}"/><text class="tag" x="5" y="${y + 10}">${item.text}</text>`;
    };
    return labels + tag(c.ask, '#3acb80') + tag(c.bid, '#d32f45');
  }

  history(c) {
    const h = c.history;
    const width = c.width - 28;
    const keys = h.points.trim().split(/\s+/).map(p => p.split(',').map(Number)).map(([x, y]) => [(x - h.left) / 3, (y - h.top) / 3]);
    // small steps between the key points keep the line rough
    const points = [];
    keys.forEach(([x, y], i) => {
      points.push([x, y]);
      const next = keys[i + 1];
      if (!next) return;
      const n = Math.floor((next[0] - x) / 2);
      for (let k = 1; k < n; k++) {
        const t = k / n;
        points.push([x + (next[0] - x) * t, y + (next[1] - y) * t + Math.sin((x + k * 3) * 12.9) * .9]);
      }
    });
    const line = points.map(([x, y]) => `${x.toFixed(1)},${y.toFixed(1)}`).join(' ');
    const first = keys[0][0];
    const last = keys[keys.length - 1][0];
    const handle = x => `<rect x="${x + .5}" y="5.5" width="6" height="25" fill="#111" stroke="#2c2c2c"/><rect x="${x + 3}" y="12" width="1" height="11" fill="#fff"/>`;
    const days = h.days.map(([text, x]) => `<text x="${x / width * 100}%" y="11">${text}</text>`).join('');
    return `<svg height="34">
      <svg viewBox="0 0 ${width} 34" width="100%" height="34" preserveAspectRatio="none">
        <polygon points="${first},34 ${line} ${last},34" fill="#3f3f57"/>
        <polyline points="${line}" fill="none" stroke="#7c7c7c"/>
        <rect x="${h.from}" y="0" width="${h.to - h.from}" height="34" fill="#fff" fill-opacity=".1"/>
      </svg>
      ${days}
      <svg viewBox="0 0 ${width} 34" width="100%" height="34" preserveAspectRatio="none">
        <rect x="${h.from - 1}" y="0" width="1" height="34"/>${handle(h.from - 8)}${handle(h.to + 1)}
      </svg>
    </svg>`;
  }
}

customElements.define('site-header', SiteHeader);
customElements.define('nav-item', NavItem);
customElements.define('account-metric', AccountMetric);
customElements.define('account-bar', AccountBar);
customElements.define('tab-bar', TabBar);
customElements.define('tab-item', TabItem);
customElements.define('chart-panel', ChartPanel);
customElements.define('price-chart', PriceChart);
</script>
</body>
</html>
